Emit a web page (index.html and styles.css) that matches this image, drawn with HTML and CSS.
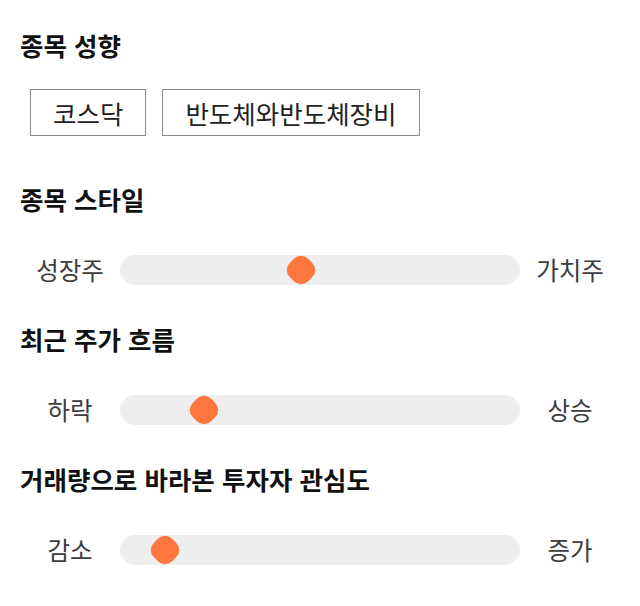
FILE: index.html
```html
<!DOCTYPE html>
<html lang="ko">
<head>
<meta charset="utf-8">
<title>종목 성향</title>
<link rel="stylesheet" href="styles.css">
</head>
<body>
<main class="page">
  <section class="section">
    <h2 class="title">종목 성향</h2>
    <div class="chips">
      <span class="chip">코스닥</span>
      <span class="chip">반도체와반도체장비</span>
    </div>
  </section>
  <section class="section">
    <h2 class="title">종목 스타일</h2>
    <div class="slider">
      <span class="label">성장주</span>
      <div class="track"><span class="thumb" style="--v:0.448"></span></div>
      <span class="label">가치주</span>
    </div>
  </section>
  <section class="section">
    <h2 class="title">최근 주가 흐름</h2>
    <div class="slider">
      <span class="label">하락</span>
      <div class="track"><span class="thumb" style="--v:0.1875"></span></div>
      <span class="label">상승</span>
    </div>
  </section>
  <section class="section">
    <h2 class="title">거래량으로 바라본 투자자 관심도</h2>
    <div class="slider">
      <span class="label">감소</span>
      <div class="track"><span class="thumb" style="--v:0.08"></span></div>
      <span class="label">증가</span>
    </div>
  </section>
</main>
</body>
</html>
```
FILE: styles.css
```css
html, body {
  margin: 0;
  padding: 0;
  background: #ffffff;
}
body {
  font-family: "Noto Sans CJK KR", "Noto Sans", sans-serif;
  color: #111111;
}
.page {
  padding: 28px 20px 0 20px;
  display: flex;
  flex-direction: column;
}
.title {
  margin: 0 0 39px 0;
  font-size: 25.5px;
  line-height: 34px;
  font-weight: 700;
  color: #111111;
}
.section:first-child .title {
  margin-bottom: 27px;
}
.chips {
  display: flex;
  gap: 16px;
  padding-left: 10px;
  margin-bottom: 46px;
}
.chip {
  border: 1px solid #8a8a8a;
  height: 45px;
  line-height: 45px;
  padding: 0 22px;
  font-size: 25.5px;
  color: #222222;
}
.slider {
  display: grid;
  grid-template-columns: 100px 1fr 100px;
  align-items: center;
  height: 30px;
  margin-bottom: 37px;
}
.label {
  text-align: center;
  font-size: 24.5px;
  line-height: 30px;
  color: #3d3d3d;
}
.track {
  position: relative;
  height: 30px;
  background: #eeeeee;
  border-radius: 15px;
}
.thumb {
  position: absolute;
  top: 0;
  left: calc(var(--v) * (100% - 30px));
  width: 30px;
  height: 30px;
  display: flex;
  align-items: center;
  justify-content: center;
}
.thumb::before {
  content: "";
  width: 26px;
  height: 26px;
  background: #ff763e;
  border-radius: 10px;
  transform: rotate(45deg);
}
```
